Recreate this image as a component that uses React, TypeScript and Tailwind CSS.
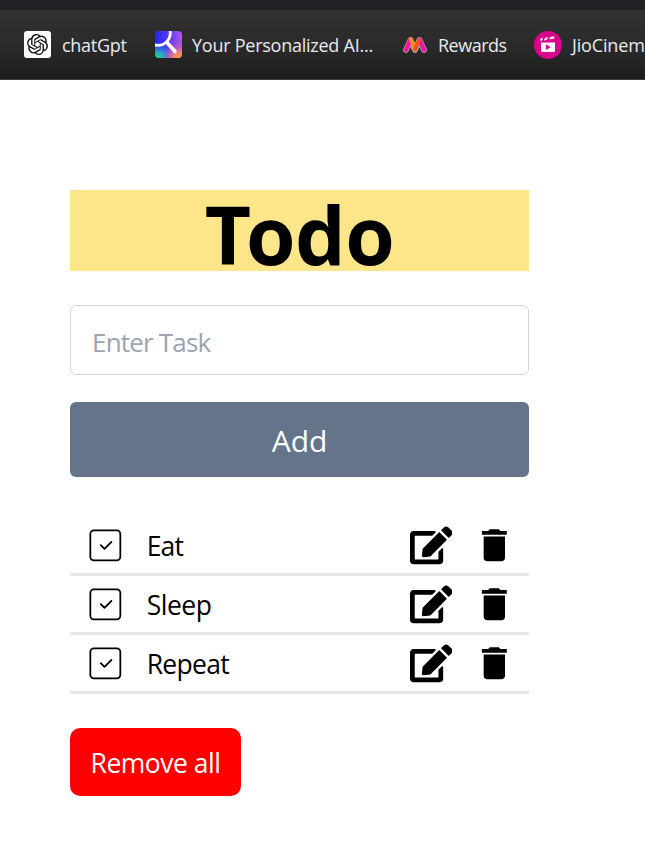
import React from "react";
import { FaEdit } from "react-icons/fa";
import { MdDelete } from "react-icons/md";
import { CiSquareCheck } from "react-icons/ci";
import { SiOpenai } from "react-icons/si";

function AssistantLogo() {
  return (
    <svg viewBox="0 0 27 27" className="h-[27px] w-[27px] shrink-0">
      <defs>
        <clipPath id="tile"><rect width="27" height="27" rx="4" /></clipPath>
        <linearGradient id="base" x1="0" y1="0" x2="1" y2="0">
          <stop offset="0" stopColor="#2525f5" />
          <stop offset=".5" stopColor="#5b38ee" />
          <stop offset="1" stopColor="#b354e6" />
        </linearGradient>
        <radialGradient id="green" cx=".1" cy="1" r=".6">
          <stop offset="0" stopColor="#12e09a" />
          <stop offset=".4" stopColor="#20b8c0" stopOpacity=".85" />
          <stop offset="1" stopColor="#3060f0" stopOpacity="0" />
        </radialGradient>
        <radialGradient id="orange" cx=".9" cy="1.05" r=".65">
          <stop offset="0" stopColor="#ff9c2e" />
          <stop offset=".35" stopColor="#fb8168" />
          <stop offset="1" stopColor="#e050e0" stopOpacity="0" />
        </radialGradient>
      </defs>
      <g clipPath="url(#tile)">
        <rect width="27" height="27" fill="url(#base)" />
        <rect width="27" height="27" fill="url(#green)" />
        <rect width="27" height="27" fill="url(#orange)" />
        <circle cx="3" cy="2" r="12.300" fill="none" stroke="#fff" strokeWidth="2.800" />
        <path d="M12 11.500L20 20.500" fill="none" stroke="#fff" strokeWidth="3.600" strokeLinecap="round" />
      </g>
    </svg>
  );
}

function MyntraLogo() {
  return (
    <svg viewBox="0 0 24 18" className="h-[18px] w-6 shrink-0">
      <g fill="none" strokeLinecap="round" strokeLinejoin="round">
        <path d="M3 14L7.500 4L12 14L16.500 4L21 14" stroke="#aaa0a6" strokeWidth="5.800" />
        <path d="M3 14L7.300 4" stroke="#f513a4" strokeWidth="4.400" />
        <path d="M21 14L16.700 4" stroke="#f513a4" strokeWidth="4.400" />
        <path d="M7.900 3.500L12 13.500" stroke="#ff8a20" strokeWidth="4" />
        <path d="M16 4L12 13.500" stroke="#f4511e" strokeWidth="3.700" />
      </g>
    </svg>
  );
}

function CinemaLogo() {
  return (
    <svg viewBox="0 0 28 28" className="h-7 w-7 shrink-0">
      <circle cx="14" cy="14" r="14" fill="#d9008d" />
      <path d="M7 11.500H21V19.500Q21 21 19.500 21H8.500Q7 21 7 19.500Z" fill="#fff" />
      <path d="M6.300 7.500L9 7L8 9.700L6.500 10ZM11 6.800L14.500 6.200L12.500 9L10 9.400ZM16.300 6L20.300 5.300V7.500L15 8.500Z" fill="#fff" />
      <path d="M12 13.300L16.600 16.200L12 19Z" fill="#d9008d" />
    </svg>
  );
}

const tasks = [
  { name: "Eat", tracking: "tracking-[-0.8px]" },
  { name: "Sleep", tracking: "tracking-[-0.5px]" },
  { name: "Repeat", tracking: "tracking-[-0.7px]" },
];

export default function App() {
  return (
    <div className="h-[847px] w-[645px] overflow-hidden bg-white font-['Open_Sans','Noto_Sans',sans-serif] text-black">
      <div className="h-[10px] bg-[#202124]" />
      <nav className="flex h-[70px] items-center overflow-hidden border-b border-[#3b3b3b] bg-linear-to-b from-[#303030] via-[#2b2b2b] to-[#1c1c1c] pl-6 text-[18px] whitespace-nowrap text-[#e8eaed]">
        <div className="flex w-[131px] shrink-0 items-center gap-[11px]">
          <span className="flex h-[27px] w-[27px] shrink-0 items-center justify-center rounded-[3px] bg-white text-[#111]">
            <SiOpenai size={21} />
          </span>
          <span className="pt-[2px] tracking-[-0.3px]">chatGpt</span>
        </div>
        <div className="flex w-[248px] shrink-0 items-center gap-[10px]">
          <AssistantLogo />
          <span className="pt-[2px] tracking-[-0.25px]">Your Personalized AI...</span>
        </div>
        <div className="flex w-[131px] shrink-0 items-center gap-[11px]">
          <MyntraLogo />
          <span className="pt-[2px] tracking-[-0.5px]">Rewards</span>
        </div>
        <div className="flex shrink-0 items-center gap-[10px]">
          <CinemaLogo />
          <span className="pt-[2px] tracking-[-0.15px]">JioCinem</span>
        </div>
      </nav>
      <main className="ml-[70px] w-[459px] pt-[110px]">
        <h1 className="h-[81px] bg-[#fde68a] text-center text-[80px] leading-[88px] font-bold">
          <span className="tracking-[-5px]">T</span>
          <span className="tracking-[-0.5px]">odo</span>
        </h1>
        <input
          placeholder="Enter Task"
          className="mt-[34px] block h-[70px] w-full rounded-[6px] border border-[#d1d5db] px-[21px] pt-[4px] text-[26px] tracking-[-0.8px] outline-none placeholder:text-[#9ca3af]"
        />
        <button className="mt-[27px] block h-[75px] w-full rounded-[6px] bg-[#64748b] pt-[2px] text-[30px] text-white">Add</button>
        <ul className="mt-10">
          {tasks.map(({ name, tracking }) => (
            <li key={name} className="flex h-[59px] items-center border-b-[3px] border-[#e5e7eb] pl-[14px]">
              <CiSquareCheck size={42.67} className="shrink-0" />
              <span className={`ml-5 flex-1 pt-[2px] text-[26.500px] leading-none ${tracking}`}>{name}</span>
              <FaEdit size={42.67} className="mr-[21px] shrink-0" />
              <MdDelete size={42.67} className="mr-[13px] shrink-0" />
            </li>
          ))}
        </ul>
        <button className="mt-[34px] flex h-[68px] w-[171px] items-center justify-center rounded-[10px] bg-[#ff0000] pt-[4px] text-[26.500px] tracking-[-0.5px] whitespace-nowrap text-white">
          Remove all
        </button>
      </main>
    </div>
  );
}
